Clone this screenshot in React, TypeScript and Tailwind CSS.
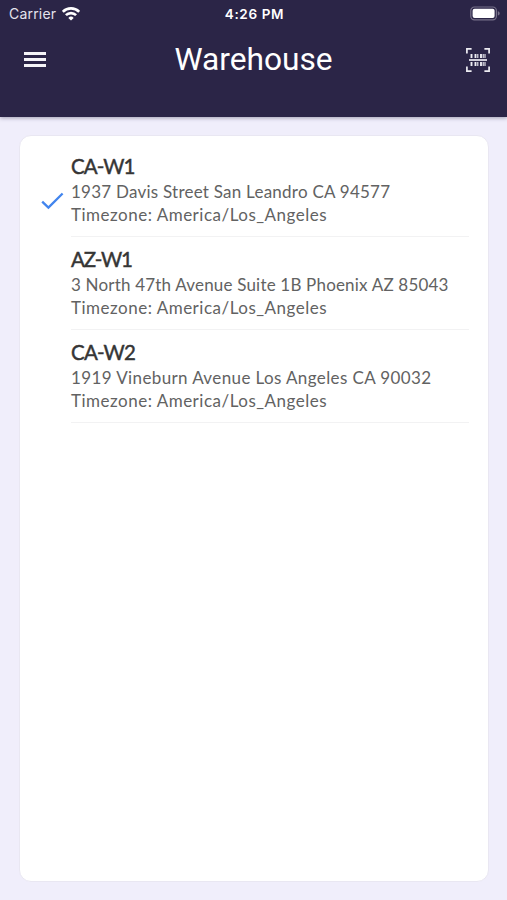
import clsx from 'clsx'

interface Warehouse {
  name: string
  address: string
  timezone: string
  nameClass: string
  addressClass: string
}

const warehouses: Warehouse[] = [
  {
    name: 'CA-W1',
    address: '1937 Davis Street San Leandro CA 94577',
    timezone: 'America/Los_Angeles',
    nameClass: 'tracking-[-0.9px]',
    addressClass: 'tracking-[0.24px]',
  },
  {
    name: 'AZ-W1',
    address: '3 North 47th Avenue Suite 1B Phoenix AZ 85043',
    timezone: 'America/Los_Angeles',
    nameClass: 'tracking-[-1.15px]',
    addressClass: 'tracking-[0.19px]',
  },
  {
    name: 'CA-W2',
    address: '1919 Vineburn Avenue Los Angeles CA 90032',
    timezone: 'America/Los_Angeles',
    nameClass: 'tracking-[-0.8px]',
    addressClass: 'tracking-[0.39px]',
  },
]

const WifiIcon = () => (
  <svg className="ml-1.5 h-[14px] w-[18px]" viewBox="0 0 18 14" fill="none" stroke="#fff" strokeWidth="2.6">
    <path d="M.8 4.8a11.6 11.6 0 0 1 16.4 0" />
    <path d="M3.9 8.2a7.2 7.2 0 0 1 10.2 0" />
    <path d="M9 13.6 6.3 10.9a3.8 3.8 0 0 1 5.4 0Z" fill="#fff" stroke="none" />
  </svg>
)

const BatteryIcon = () => (
  <svg className="h-[15px] w-[31px]" viewBox="0 0 31 15">
    <rect x="1.8" y="1" width="25.6" height="12.8" rx="3.6" fill="none" stroke="#777189" strokeWidth="1.2" />
    <rect x="3.6" y="2.8" width="22" height="9.2" rx="2" fill="#fff" />
    <path d="M28.8 5.2c1.1.4 1.9 1.2 1.9 2.2s-.8 1.8-1.9 2.2Z" fill="#777189" />
  </svg>
)

const ScanIcon = () => (
  <svg className="h-6 w-6" viewBox="0 0 24 24" fill="none" stroke="#eeedf3">
    <path
      d="M.9 5.5V.9h4.7M18.4.9h4.7v4.6M23.1 18.5v4.6h-4.7M5.6 23.1H.9v-4.6"
      strokeWidth="1.7"
    />
    <path d="M3 12h18" strokeWidth="1.7" />
    <path d="M5.5 6v4M9.5 6v4M15 6v4M5.5 14v4M9.5 14v4M15 14v4" strokeWidth="1.9" />
    <path d="M11.8 6v4M17.2 6v4M19 6v4M11.8 14v4M17.2 14v4M19 14v4" strokeWidth="1.1" />
  </svg>
)

const Header = () => (
  <header className="relative z-10 h-[117px] bg-[#2b2547] text-white shadow-[0_1px_4px_rgba(43,37,71,0.4)]">
    <div className="grid h-[27px] grid-cols-3 items-center pr-[7px] pl-[9px] font-['Inter',sans-serif] text-[14px]">
      <div className="flex items-center">
        <span className="tracking-[0.2px] text-[#e5e3ed]">Carrier</span>
        <WifiIcon />
      </div>
      <span className="pt-px text-center text-[13.5px] font-semibold tracking-[0.65px]">4:26 PM</span>
      <div className="flex justify-end">
        <BatteryIcon />
      </div>
    </div>
    <div className="grid h-[65px] grid-cols-[1fr_auto_1fr] items-center pr-[17px] pl-6">
      <button className="grid w-[22px] gap-[3px]" aria-label="Menu">
        <span className="h-[3px] bg-[#f4f3f7]" />
        <span className="h-[3px] bg-[#f4f3f7]" />
        <span className="h-[3px] bg-[#f4f3f7]" />
      </button>
      <h1 className="mr-[7px] font-['Roboto',sans-serif] text-[31.7px] leading-none">Warehouse</h1>
      <button className="justify-self-end" aria-label="Scan">
        <ScanIcon />
      </button>
    </div>
  </header>
)

const WarehouseRow = ({ warehouse, selected }: { warehouse: Warehouse; selected: boolean }) => (
  <li className="flex h-[93px] pr-[19px] pl-[21px]">
    <div className="flex w-[30px] shrink-0 items-center pt-[20px]">
      {selected && (
        <svg className="h-[18px] w-[23px]" viewBox="0 0 23 18" fill="none" stroke="#4285ee" strokeWidth="2.3">
          <path d="m1.2 9.6 6.2 6L21.6 1.5" />
        </svg>
      )}
    </div>
    <div className="flex-1 border-b border-[#f2f2f3] pt-[9px] whitespace-nowrap text-[#626262]">
      <h2
        className={clsx(
          'text-[20.5px] leading-[27px] text-[#353535] [-webkit-text-stroke:0.45px_#353535]',
          warehouse.nameClass
        )}
      >
        {warehouse.name}
      </h2>
      <p className={clsx('text-[17px] leading-[23px]', warehouse.addressClass)}>{warehouse.address}</p>
      <p className="text-[17px] leading-[24px] tracking-[0.5px]">Timezone: {warehouse.timezone}</p>
    </div>
  </li>
)

export default function App() {
  return (
    <div className="flex h-screen flex-col overflow-hidden bg-[#f0eefb]">
      <Header />
      <main className="mr-[18px] mb-[18px] ml-[19px] mt-[18px] flex-1 rounded-xl border border-[#e9e7f2] bg-white pt-[8px] font-['Lato',sans-serif]">
        <ul>
          {warehouses.map((warehouse, index) => (
            <WarehouseRow key={warehouse.name} warehouse={warehouse} selected={index === 0} />
          ))}
        </ul>
      </main>
    </div>
  )
}
